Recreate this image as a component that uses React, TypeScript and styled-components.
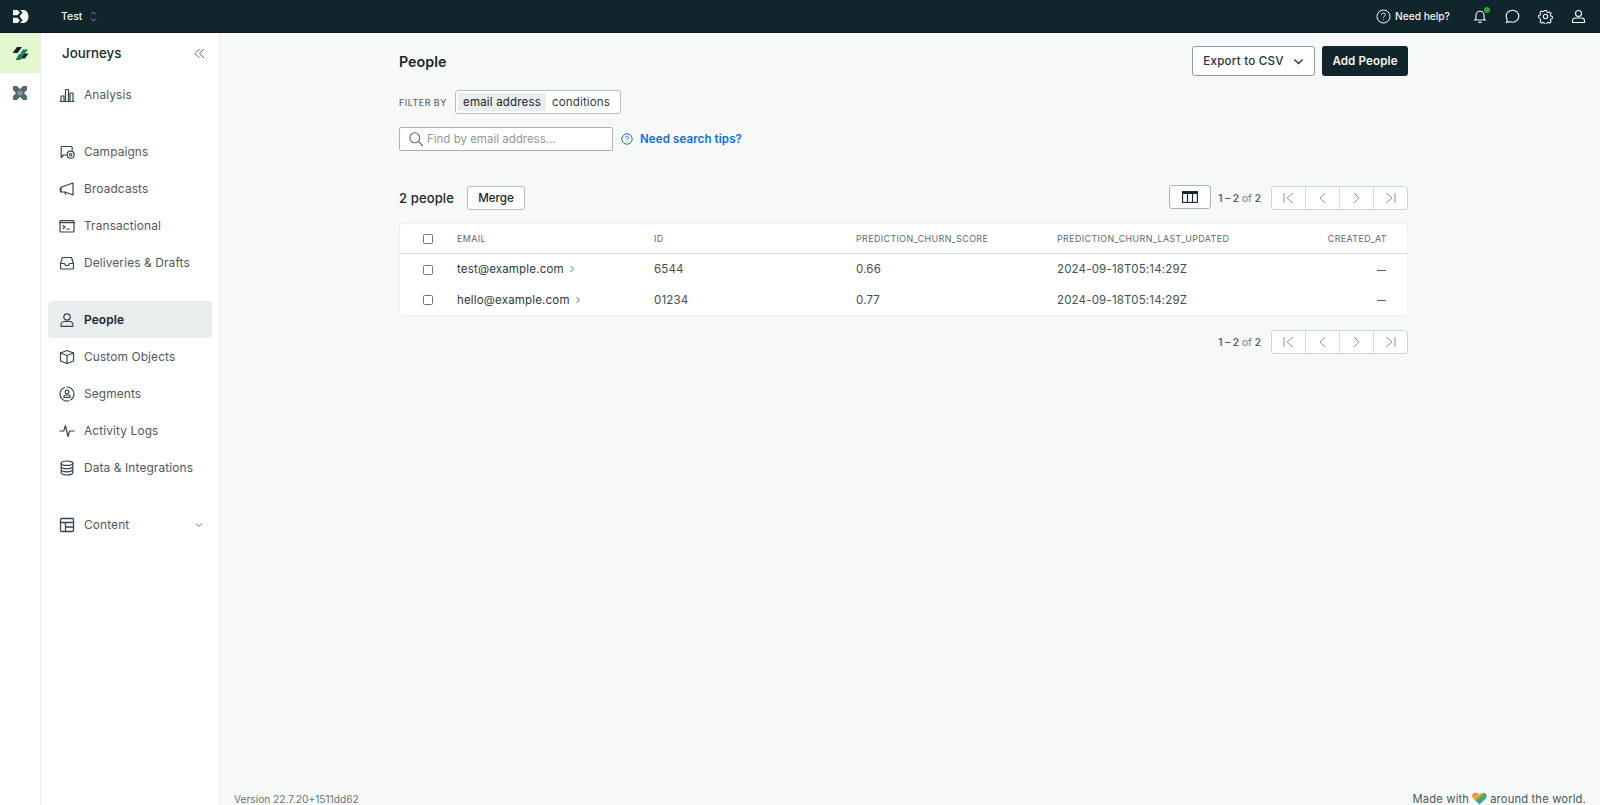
import React from "react";
import styled, { createGlobalStyle } from "styled-components";

const Global = createGlobalStyle`
  html, body { margin: 0; padding: 0; height: 100%; overflow: hidden; }
  body { font-family: Inter, "Noto Sans", sans-serif; background: #f7f9f8; color: #17262c; }
  #root { height: 805px; }
  * { box-sizing: border-box; }
`;

const Page = styled.div`display: flex; flex-direction: column; width: 1600px; height: 805px;`;
const TopBar = styled.header`
  height: 33px; flex: none; background: #10262c; color: #fff; display: flex; align-items: center;
  border-bottom: 1px solid #0b1a1e;
`;
const LogoSlot = styled.div`width: 40px; display: flex; justify-content: center; align-items: center;`;
const Workspace = styled.div`
  margin-left: 21px; display: flex; align-items: center; gap: 8px; font-size: 10.5px; font-weight: 500; color: #f2f4f4;
`;
const TopRight = styled.div`margin-left: auto; display: flex; align-items: center; color: #f4f6f6; padding-right: 13px;`;
const Help = styled.div`display: flex; align-items: center; gap: 4px; font-size: 10.2px; font-weight: 500; margin-right: 21px;`;
const TopIcon = styled.div`
  position: relative; width: 17px; height: 17px; margin-left: ${(p: { $gap: number }) => p.$gap}px; display: flex; align-items: center; justify-content: center;
`;
const Dot = styled.span`
  position: absolute; top: -1px; right: -2px; width: 6px; height: 6px; border-radius: 50%; background: #2f9e2f;
`;
const Body = styled.div`flex: 1; display: flex; min-height: 0;`;
const Rail = styled.nav`width: 41px; flex: none; background: #fff; border-right: 1px solid #eaeeee;`;
const RailItem = styled.div<{ $active?: boolean }>`
  height: 40px; display: flex; align-items: center; justify-content: center;
  background: ${(p) => (p.$active ? "#e4f8cf" : "transparent")};
`;
const Side = styled.aside`
  width: 179px; flex: none; background: #fff; border-right: 1px solid #eaeeee; padding: 0 7px;
`;
const SideHead = styled.div`
  height: 40px; display: flex; align-items: center; justify-content: space-between; padding: 0 7px 0 14px;
  font-size: 13.3px; font-weight: 500; color: #17262c; margin-bottom: 3px;
`;
const NavItem = styled.div<{ $active?: boolean; $after?: number }>`
  height: 37px; border-radius: 4px; display: flex; align-items: center; gap: 9px; padding: 0 9px 0 11px;
  margin-bottom: ${(p) => p.$after ?? 0}px;
  font-size: 11.9px; letter-spacing: 0.01em; color: ${(p) => (p.$active ? "#17262c" : "#50595d")};
  font-weight: ${(p) => (p.$active ? 600 : 400)};
  background: ${(p) => (p.$active ? "#e8edee" : "transparent")};
`;
const NavLabel = styled.span`flex: 1; white-space: nowrap;`;
const NavIconBox = styled.span`width: 16px; height: 16px; flex: none; display: flex; align-items: center; justify-content: center; color: #33474d;`;
const Main = styled.main`flex: 1; min-width: 0; display: flex; flex-direction: column; position: relative;`;
const Content = styled.div`flex: 1; padding: 0 179px 0 166px;`;
const HeadBlock = styled.div`padding: 13px 13px 0; border-bottom: 1px solid #eff2f2; height: 124px;`;
const TitleRow = styled.div`display: flex; align-items: center; justify-content: space-between; height: 30px;`;
const Title = styled.h1`margin: 0; font-size: 14.3px; font-weight: 600; color: #17262c;`;
const Actions = styled.div`display: flex; gap: 7px;`;
const OutlineBtn = styled.button`
  height: 30px; width: 123px; border: 1px solid #8f9a9e; border-radius: 3px; background: #fff; color: #23363c;
  font: 500 11.6px Inter, sans-serif; letter-spacing: 0.02em; display: flex; align-items: center; justify-content: center; gap: 9px; padding: 0;
`;
const DarkBtn = styled.button`
  height: 30px; width: 86px; border: 0; border-radius: 3px; background: #10262c; color: #f3f5f5;
  font: 600 11.6px Inter, sans-serif; letter-spacing: 0.01em; padding: 0;
`;
const FilterRow = styled.div`display: flex; align-items: center; margin-top: 14px; gap: 11px;`;
const FilterLabel = styled.span`font-size: 8.9px; font-weight: 500; letter-spacing: 0.06em; color: #5c686c; width: 45px; white-space: nowrap;`;
const FilterBox = styled.div`
  height: 24px; width: 166px; border: 1px solid #b5bec1; border-radius: 3px; background: #fff; display: flex; align-items: center; padding: 2px;
`;
const FilterOption = styled.span<{ $on?: boolean }>`
  height: 100%; display: flex; align-items: center; justify-content: center; border-radius: 2px; font-size: 11.5px; white-space: nowrap;
  width: ${(p) => (p.$on ? 88 : 70)}px; color: ${(p) => (p.$on ? "#17262c" : "#30393d")};
  background: ${(p) => (p.$on ? "#e8edee" : "transparent")}; letter-spacing: 0.015em;
`;
const SearchRow = styled.div`display: flex; align-items: center; margin-top: 13px;`;
const SearchBox = styled.div`
  width: 214px; height: 24px; border: 1px solid #a9b3b6; border-radius: 2px; background: #fff; display: flex; align-items: center; gap: 3px; padding-left: 8px;
  font-size: 11.5px; color: #8f999c;
`;
const TipsLink = styled.a`
  margin-left: 8px; display: flex; align-items: center; gap: 7px; color: #0b6fdc; font-size: 11.5px; font-weight: 600; letter-spacing: 0.01em;
`;
const ListArea = styled.div`padding: 27px 13px 0;`;
const ToolRow = styled.div`display: flex; align-items: center; height: 28px;`;
const Count = styled.span`font-size: 13px; font-weight: 500; color: #17262c; letter-spacing: 0.01em;`;
const MergeBtn = styled.button`
  margin-left: 13px; width: 58px; height: 24px; background: #fff; border: 1px solid #b5bec1; border-radius: 3px; font: 500 11.6px Inter, sans-serif; color: #17262c; padding: 0;
`;
const ColBtn = styled.button`
  margin-left: auto; width: 42px; height: 24px; background: #fff; border: 1px solid #aab4b7; border-radius: 3px; margin-top: -3px;
  display: flex; align-items: center; justify-content: center; padding: 0;
`;
const Pagination = styled.div`display: flex; align-items: center; justify-content: flex-end;`;
const RangeText = styled.span`font-size: 10.2px; color: #707a7e; margin: 0 10px 0 7px; white-space: nowrap; b { font-weight: 600; color: #5a6569; }`;
const Pager = styled.div`
  display: flex; width: 137px; height: 24px; background: #fff; border: 1px solid #cfd6d8; border-radius: 3px; overflow: hidden;
`;
const PagerBtn = styled.span`
  flex: 1; display: flex; align-items: center; justify-content: center; color: #8b9599;
  & + & { border-left: 1px solid #d9dfe0; }
`;
const TableCard = styled.div`
  margin-top: 11px; background: #fff; border: 1px solid #eef1f1; border-radius: 3px; overflow: hidden;
`;
const Row = styled.div<{ $head?: boolean }>`
  display: grid; grid-template-columns: 57px 197px 202px 201px 1fr 80px; align-items: center;
  height: ${(p) => (p.$head ? 30 : 30.5)}px;
  ${(p) => (p.$head ? "border-bottom: 1px solid #cfd8da; font-size: 8.9px; letter-spacing: 0.045em; color: #5c686c;" : "font-size: 11.5px; letter-spacing: 0.015em; color: #444f53;")}
`;
const CheckCell = styled.div`display: flex; justify-content: center; padding-right: 0; padding-left: 0;`;
const Check = styled.span`display: block; width: 10px; height: 10px; border: 1px solid #6c777b; border-radius: 1.5px; margin-right: 1px; margin-top: 1px;`;
const EmailCell = styled.div`display: flex; align-items: center; gap: 5px; color: #2c393e;`;
const EndCell = styled.div`text-align: right; padding-right: 20px; white-space: nowrap;`;
const Dash = styled.span`display: inline-block; width: 9px; height: 1px; background: #555f63; vertical-align: middle; margin-right: 1px;`;
const BottomPager = styled.div`margin-top: 14px;`;
const Footer = styled.footer`
  position: absolute; left: 14px; right: 14px; bottom: 0; height: 13px; display: flex; justify-content: space-between; font-size: 10.2px; color: #6a7478; align-items: flex-end; line-height: 12px;
`;
const Made = styled.span`display: flex; align-items: center; gap: 1px; font-size: 11.2px; color: #4d575b; letter-spacing: 0.015em;`;

type IP = { s?: number };
const Svg = ({ s = 16, children, w = 1.2 }: IP & { children: React.ReactNode; w?: number }) => (
  <svg width={s} height={s} viewBox="0 0 16 16" fill="none" stroke="currentColor" strokeWidth={w} strokeLinecap="round" strokeLinejoin="round">{children}</svg>
);

const Analysis = () => <Svg><path d="M1 14.5h14" /><rect x="2" y="9" width="3" height="5.5" /><rect x="6.5" y="2.5" width="3" height="12" /><rect x="11" y="6" width="3" height="8.5" /></Svg>;
const Campaign = () => <Svg><path d="M8 11H4.5L2.2 13.5V3.5a1 1 0 0 1 1-1h9a1 1 0 0 1 1 1V6" /><circle cx="11.7" cy="10.7" r="3.5" /><circle cx="11.7" cy="10.7" r="1.2" /></Svg>;
const Broadcast = () => <Svg><path d="M14 2v12L6 11H2V6.2L14 2Z" /><path d="M2 6.5 1 8.5l1 2.5M6 11l.5 2.5" /></Svg>;
const Transact = () => <Svg><rect x="1" y="2.5" width="14" height="11.5" rx="1" /><path d="M1 4.5h14" strokeWidth="1.6" /><path d="m4 7.5 2 1.5-2 1.5M7.5 11h3" /></Svg>;
const Inbox = () => <Svg><path d="M1.5 8.5 3.5 2.5h9l2 6v4.5a1 1 0 0 1-1 1h-11a1 1 0 0 1-1-1V8.5Z" /><path d="M1.5 8.5h4l1 2h3l1-2h4" /></Svg>;
const Person = () => <Svg><circle cx="8" cy="5" r="3.2" /><path d="M2 14.3v-1.6c0-1.8 1.6-3.2 3.4-3.2h5.2c1.8 0 3.4 1.4 3.4 3.2v1.6H2Z" /></Svg>;
const Cube = () => <Svg><path d="M8 1.5 14.5 4v8L8 14.5 1.5 12V4L8 1.5Z" /><path d="M1.5 4 8 6.5 14.5 4M8 6.5v8" /></Svg>;
const Segment = () => <Svg><path d="M8 1a7 7 0 0 1 7 7 7 7 0 0 1-3 5.7M10 14.7A7 7 0 0 1 1 8a7 7 0 0 1 4.5-6.5" /><circle cx="8" cy="6" r="1.8" /><path d="M4.8 11.3v-.6c0-1 .8-1.7 1.7-1.7h3c.9 0 1.7.7 1.7 1.7v.6H4.8Z" /></Svg>;
const Pulse = () => <Svg><path d="M.8 8h4l1.6-5.5L9 13.5l1.6-5.5h4.6" /></Svg>;
const Database = () => <Svg><ellipse cx="8" cy="3.2" rx="5.8" ry="2.2" /><path d="M2.2 3.2v9.6c0 1.2 2.6 2.2 5.8 2.2s5.8-1 5.8-2.2V3.2M2.2 6.4C2.2 7.6 4.8 8.6 8 8.6s5.8-1 5.8-2.2M2.2 9.6c0 1.2 2.6 2.2 5.8 2.2s5.8-1 5.8-2.2" /></Svg>;
const Layout = () => <Svg w={1.3}><rect x="1.5" y="1.5" width="13" height="13" rx="1" /><path d="M1.5 5.5h13M6.5 5.5v9M6.5 10h8" /></Svg>;
const ChevDown = ({ s = 8 }: IP) => <svg width={s} height={s} viewBox="0 0 8 8" fill="none" stroke="currentColor" strokeWidth="0.9"><path d="m1 2.5 3 3 3-3" /></svg>;
const ChevRight = () => <svg width="6" height="8" viewBox="0 0 6 8" fill="none" stroke="#555f63" strokeWidth="0.9"><path d="m1.5 1 3 3-3 3" /></svg>;
const First = () => <svg width="13" height="12" viewBox="0 0 13 12" fill="none" stroke="currentColor" strokeWidth="1"><path d="M2 1v10M11 1 5 6l6 5" /></svg>;
const Prev = () => <svg width="9" height="12" viewBox="0 0 9 12" fill="none" stroke="currentColor" strokeWidth="1"><path d="M7 1 2 6l5 5" /></svg>;
const Next = () => <svg width="9" height="12" viewBox="0 0 9 12" fill="none" stroke="currentColor" strokeWidth="1"><path d="m2 1 5 5-5 5" /></svg>;
const Last = () => <svg width="13" height="12" viewBox="0 0 13 12" fill="none" stroke="currentColor" strokeWidth="1"><path d="M11 1v10M2 1l6 5-6 5" /></svg>;

const PagerSet = () => (
  <Pagination>
    <RangeText><b>1 – 2</b> of <b>2</b></RangeText>
    <Pager><PagerBtn><First /></PagerBtn><PagerBtn><Prev /></PagerBtn><PagerBtn><Next /></PagerBtn><PagerBtn><Last /></PagerBtn></Pager>
  </Pagination>
);

const nav: { label: string; icon: React.ReactNode; after?: number; active?: boolean; chev?: boolean }[] = [
  { label: "Analysis", icon: <Analysis />, after: 20 },
  { label: "Campaigns", icon: <Campaign /> },
  { label: "Broadcasts", icon: <Broadcast /> },
  { label: "Transactional", icon: <Transact /> },
  { label: "Deliveries & Drafts", icon: <Inbox />, after: 20 },
  { label: "People", icon: <Person />, active: true },
  { label: "Custom Objects", icon: <Cube /> },
  { label: "Segments", icon: <Segment /> },
  { label: "Activity Logs", icon: <Pulse /> },
  { label: "Data & Integrations", icon: <Database />, chev: true, after: 20 },
  { label: "Content", icon: <Layout />, chev: true },
];

const rows = [
  { email: "test@example.com", id: "6544", score: "0.66" },
  { email: "hello@example.com", id: "01234", score: "0.77" },
];

export default function App() {
  return (
    <Page>
      <Global />
      <TopBar>
        <LogoSlot>
          <svg width="17" height="15" viewBox="0 0 17 15" fill="#f6f7ee">
            <path d="M1 1h4.5l2.5 2.5L5.5 6.3H1V1ZM1 8.7h4.5L8 11.5 5.5 14H1V8.7Z" />
            <path d="M8 1h3.5C14.5 1 16.5 4 16.5 7.5S14.5 14 11.5 14H8l2.7-2.8-2.7-3V6.5L10.7 3.6 8 1Z" />
          </svg>
        </LogoSlot>
        <Workspace>
          Test
          <svg width="7" height="11" viewBox="0 0 7 11" fill="none" stroke="#8c989b" strokeWidth="0.9"><path d="m1 3.5 2.5-2.5L6 3.5M1 7.5 3.5 10 6 7.5" /></svg>
        </Workspace>
        <TopRight>
          <Help>
            <svg width="15" height="15" viewBox="0 0 15 15" fill="none" stroke="currentColor" strokeWidth="1"><circle cx="7.5" cy="7.5" r="6.5" /><path d="M5.6 5.8c0-1 .8-1.8 1.9-1.8s1.9.7 1.9 1.7c0 1.5-1.9 1.5-1.9 3M7.5 10.4v.8" /></svg>
            Need help?
          </Help>
          <TopIcon $gap={0}>
            <Dot />
            <svg width="14" height="15" viewBox="0 0 14 15" fill="none" stroke="currentColor" strokeWidth="1.1"><path d="M2 11c.8-.8 1-1.6 1-3V6.2C3 4 4.7 2.2 7 2.2S11 4 11 6.2V8c0 1.4.2 2.2 1 3H2ZM5.5 13.4h3" /></svg>
          </TopIcon>
          <TopIcon $gap={16}>
            <svg width="15" height="15" viewBox="0 0 15 15" fill="none" stroke="currentColor" strokeWidth="1.1"><path d="M7.5 1.2c3.5 0 6.3 2.6 6.3 6s-2.8 6-6.3 6c-1 0-2-.2-2.8-.6l-3.2.9.7-2.9C1.600 9.500 1.200 8.400 1.200 7.200c0-3.400 2.800-6 6.300-6Z" /></svg>
          </TopIcon>
          <TopIcon $gap={16}>
            <svg width="15" height="15" viewBox="0 0 15 15" fill="none" stroke="currentColor" strokeWidth="1.1"><circle cx="7.5" cy="7.500" r="2.200" /><path d="M6.300 1h2.400l.4 1.800 1.300.6 1.600-1 1.700 1.700-1 1.600.6 1.300 1.700.4v2.400l-1.700.4-.6 1.300 1 1.600-1.700 1.700-1.600-1-1.300.6-.4 1.700H6.300l-.4-1.700-1.300-.6-1.600 1-1.700-1.700 1-1.600-.6-1.300L0 8.700V6.300l1.700-.4.600-1.300-1-1.600L3 1.300l1.600 1 1.300-.6L6.300 1Z" transform="translate(.7 .7) scale(.91)" /></svg>
          </TopIcon>
          <TopIcon $gap={16}>
            <svg width="15" height="15" viewBox="0 0 15 15" fill="none" stroke="currentColor" strokeWidth="1.1"><circle cx="7.5" cy="4.500" r="3" /><path d="M1.500 13.500v-1.700c0-1.600 1.400-2.800 3-2.800h6c1.600 0 3 1.200 3 2.800v1.700h-12Z" /></svg>
          </TopIcon>
        </TopRight>
      </TopBar>
      <Body>
        <Rail>
          <RailItem $active>
            <svg width="17" height="15" viewBox="0 0 17 15">
              <path d="M5 1h5L5.500 7H.5z M11.500 7.500h5L13 12.500H8z" fill="#10262c" transform="translate(0 0)" />
              <path d="M8 7.500 11 3.500h5l-3.500 4.500zM7 8h5L8.500 14h-5z" fill="#17805f" />
            </svg>
          </RailItem>
          <RailItem>
            <svg width="16" height="16" viewBox="0 0 16 16" fill="#56696f">
              <path d="M1 1h4l3 3 3-3h4v4l-3 3 3 3v4h-4l-3-3-3 3H1v-4l3-3-3-3V1Z" />
              <circle cx="8" cy="8" r="2.500" fill="#869499" />
            </svg>
          </RailItem>
        </Rail>
        <Side>
          <SideHead>
            Journeys
            <svg width="11" height="11" viewBox="0 0 11 11" fill="none" stroke="#5f6b6f" strokeWidth="1"><path d="M5.500 1 1 5.500 5.500 10M10 1 5.500 5.500 10 10" /></svg>
          </SideHead>
          {nav.map((n) => (
            <NavItem key={n.label} $active={n.active} $after={n.after}>
              <NavIconBox>{n.icon}</NavIconBox>
              <NavLabel>{n.label}</NavLabel>
              {n.chev && <ChevDown />}
            </NavItem>
          ))}
        </Side>
        <Main>
          <Content>
            <HeadBlock>
              <TitleRow>
                <Title>People</Title>
                <Actions>
                  <OutlineBtn>Export to CSV <ChevDown s={11} /></OutlineBtn>
                  <DarkBtn>Add People</DarkBtn>
                </Actions>
              </TitleRow>
              <FilterRow>
                <FilterLabel>FILTER BY</FilterLabel>
                <FilterBox>
                  <FilterOption $on>email address</FilterOption>
                  <FilterOption>conditions</FilterOption>
                </FilterBox>
              </FilterRow>
              <SearchRow>
                <SearchBox>
                  <svg width="16" height="16" viewBox="0 0 16 16" fill="none" stroke="#5f6b6f" strokeWidth="1.100"><circle cx="6.800" cy="6.800" r="5" /><path d="m10.500 10.500 4.500 4.500" /></svg>
                  Find by email address...
                </SearchBox>
                <TipsLink>
                  <svg width="12" height="12" viewBox="0 0 15 15" fill="none" stroke="currentColor" strokeWidth="1.200"><circle cx="7.500" cy="7.500" r="6.500" /><path d="M5.600 5.800c0-1 .8-1.800 1.900-1.800s1.900.7 1.900 1.700c0 1.500-1.900 1.500-1.900 3M7.500 10.400v.8" /></svg>
                  Need search tips?
                </TipsLink>
              </SearchRow>
            </HeadBlock>
            <ListArea>
              <ToolRow>
                <Count>2 people</Count>
                <MergeBtn>Merge</MergeBtn>
                <ColBtn>
                  <svg width="16" height="12" viewBox="0 0 16 12" fill="none" stroke="#10262c" strokeWidth="1.100"><rect x=".6" y=".6" width="14.800" height="10.800" /><path d="M.6 2h14.800" strokeWidth="2" /><path d="M5.500 2v9.500M10.500 2v9.500" /></svg>
                </ColBtn>
                <PagerSet />
              </ToolRow>
              <TableCard>
                <Row $head>
                  <CheckCell><Check /></CheckCell>
                  <div>EMAIL</div><div>ID</div><div>PREDICTION_CHURN_SCORE</div><div>PREDICTION_CHURN_LAST_UPDATED</div>
                  <EndCell>CREATED_AT</EndCell>
                </Row>
                {rows.map((r) => (
                  <Row key={r.id}>
                    <CheckCell><Check /></CheckCell>
                    <EmailCell>{r.email} <ChevRight /></EmailCell>
                    <div>{r.id}</div><div>{r.score}</div><div>2024-09-18T05:14:29Z</div>
                    <EndCell><Dash /></EndCell>
                  </Row>
                ))}
              </TableCard>
              <BottomPager><PagerSet /></BottomPager>
            </ListArea>
          </Content>
          <Footer>
            <span>Version 22.7.20+1511dd62</span>
            <Made>
              Made with
              <svg width="15" height="13" viewBox="0 0 15 13" style={{ margin: "0 2px" }}>
                <defs>
                  <linearGradient id="rb" x1="0" y1="0" x2="1" y2="1">
                    <stop offset="0" stopColor="#e8473f" /><stop offset=".3" stopColor="#f4b63f" /><stop offset=".5" stopColor="#4cb050" /><stop offset=".75" stopColor="#3d8fe0" /><stop offset="1" stopColor="#6a4fc0" />
                  </linearGradient>
                </defs>
                <path d="M7.500 12.500 1.200 6.500C-.2 5 0 2.600 1.500 1.400 3.200.2 5.700.5 7.500 2.500 9.300.5 11.800.2 13.500 1.400c1.500 1.200 1.700 3.600.3 5.100L7.500 12.500Z" fill="url(#rb)" />
              </svg>
              around the world.
            </Made>
          </Footer>
        </Main>
      </Body>
    </Page>
  );
}
